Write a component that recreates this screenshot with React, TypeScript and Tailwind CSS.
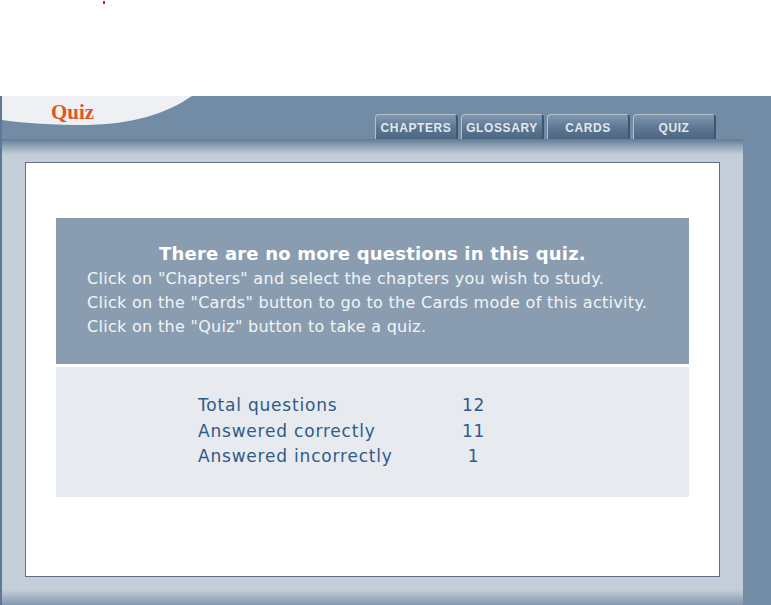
import React from "react"

const tabs = ["CHAPTERS", "GLOSSARY", "CARDS", "QUIZ"]

const stats = [
  { label: "Total questions", value: "12" },
  { label: "Answered correctly", value: "11" },
  { label: "Answered incorrectly", value: "1" },
]

export default function App() {
  return (
    <div className="w-[771px] h-[605px] overflow-hidden bg-white font-['DejaVu_Sans',Verdana,sans-serif]">
      {/* top blank strip */}
      <div className="relative h-[96px] bg-white">
        <span className="absolute left-[103px] top-[1px] w-[2px] h-[3px] bg-[#ff0000]" />
      </div>

      <div className="flex h-[509px] bg-[#728ca6] border-l-2 border-[#5f7895]">
        <div className="flex flex-col w-[741px]">
          {/* header with swoosh + tabs */}
          <div className="relative h-[43px] flex items-end">
            <svg className="absolute left-0 top-0" width="200" height="32" viewBox="0 0 200 32">
              <path d="M0 0 L190 0 Q150 28 85 29 Q35 29 0 24 Z" fill="#eff0f4" />
            </svg>
            <span className="absolute left-[49px] top-[1px] text-[21px] font-bold text-[#e2571f] font-['Liberation_Serif',serif]">
              Quiz
            </span>
            <div className="flex gap-[3px] ml-[373px]">
              {tabs.map((t) => (
                <div
                  key={t}
                  className="w-[83px] h-[25px] pt-[2px] rounded-t-[4px] border-t border-l border-[#b4c2d0] border-r-2 border-r-[#3f5670] bg-gradient-to-b from-[#8299b0] via-[#5f7995] to-[#4c6682] flex items-center justify-center text-[12px] font-bold tracking-[0.6px] text-[#e2e8ee] font-['Liberation_Sans',Arial,sans-serif]"
                >
                  {t}
                </div>
              ))}
            </div>
          </div>

          {/* panel */}
          <div className="flex-1 flex flex-col bg-[#c4ced9]">
            <div className="h-[16px] bg-gradient-to-b from-[#627b95] via-[#97a9bb] to-[#c4ced9]" />
            <div className="flex-1 px-[23px] pt-[7px] pb-[13px]">
              <div className="h-[415px] bg-white border border-[#5b6f86] px-[30px] pt-[55px]">
                <div className="bg-[#8a9db0] h-[146px] pt-[23px] text-[#f2f4f7]">
                  <div className="text-center text-[18px] font-bold leading-[26px] tracking-[0.2px] text-white">
                    There are no more questions in this quiz.
                  </div>
                  <div className="pl-[31px] text-[16px] leading-[24px] tracking-[0.3px]">
                    <div>Click on "Chapters" and select the chapters you wish to study.</div>
                    <div>Click on the "Cards" button to go to the Cards mode of this activity.</div>
                    <div>Click on the "Quiz" button to take a quiz.</div>
                  </div>
                </div>
                <div className="h-[3px] bg-white" />
                <div className="bg-[#e7eaef] h-[130px] pt-[26px] pl-[142px] text-[#2f5b88] text-[17px] leading-[25.5px] tracking-[0.8px]">
                  {stats.map((s) => (
                    <div key={s.label} className="flex">
                      <span className="w-[252px]">{s.label}</span>
                      <span className="w-[47px] text-center">{s.value}</span>
                    </div>
                  ))}
                </div>
              </div>
            </div>
            <div className="h-[15px] bg-gradient-to-b from-[#c4ced9] via-[#a2b2c3] to-[#8297ae]" />
          </div>
        </div>
      </div>
    </div>
  )
}
